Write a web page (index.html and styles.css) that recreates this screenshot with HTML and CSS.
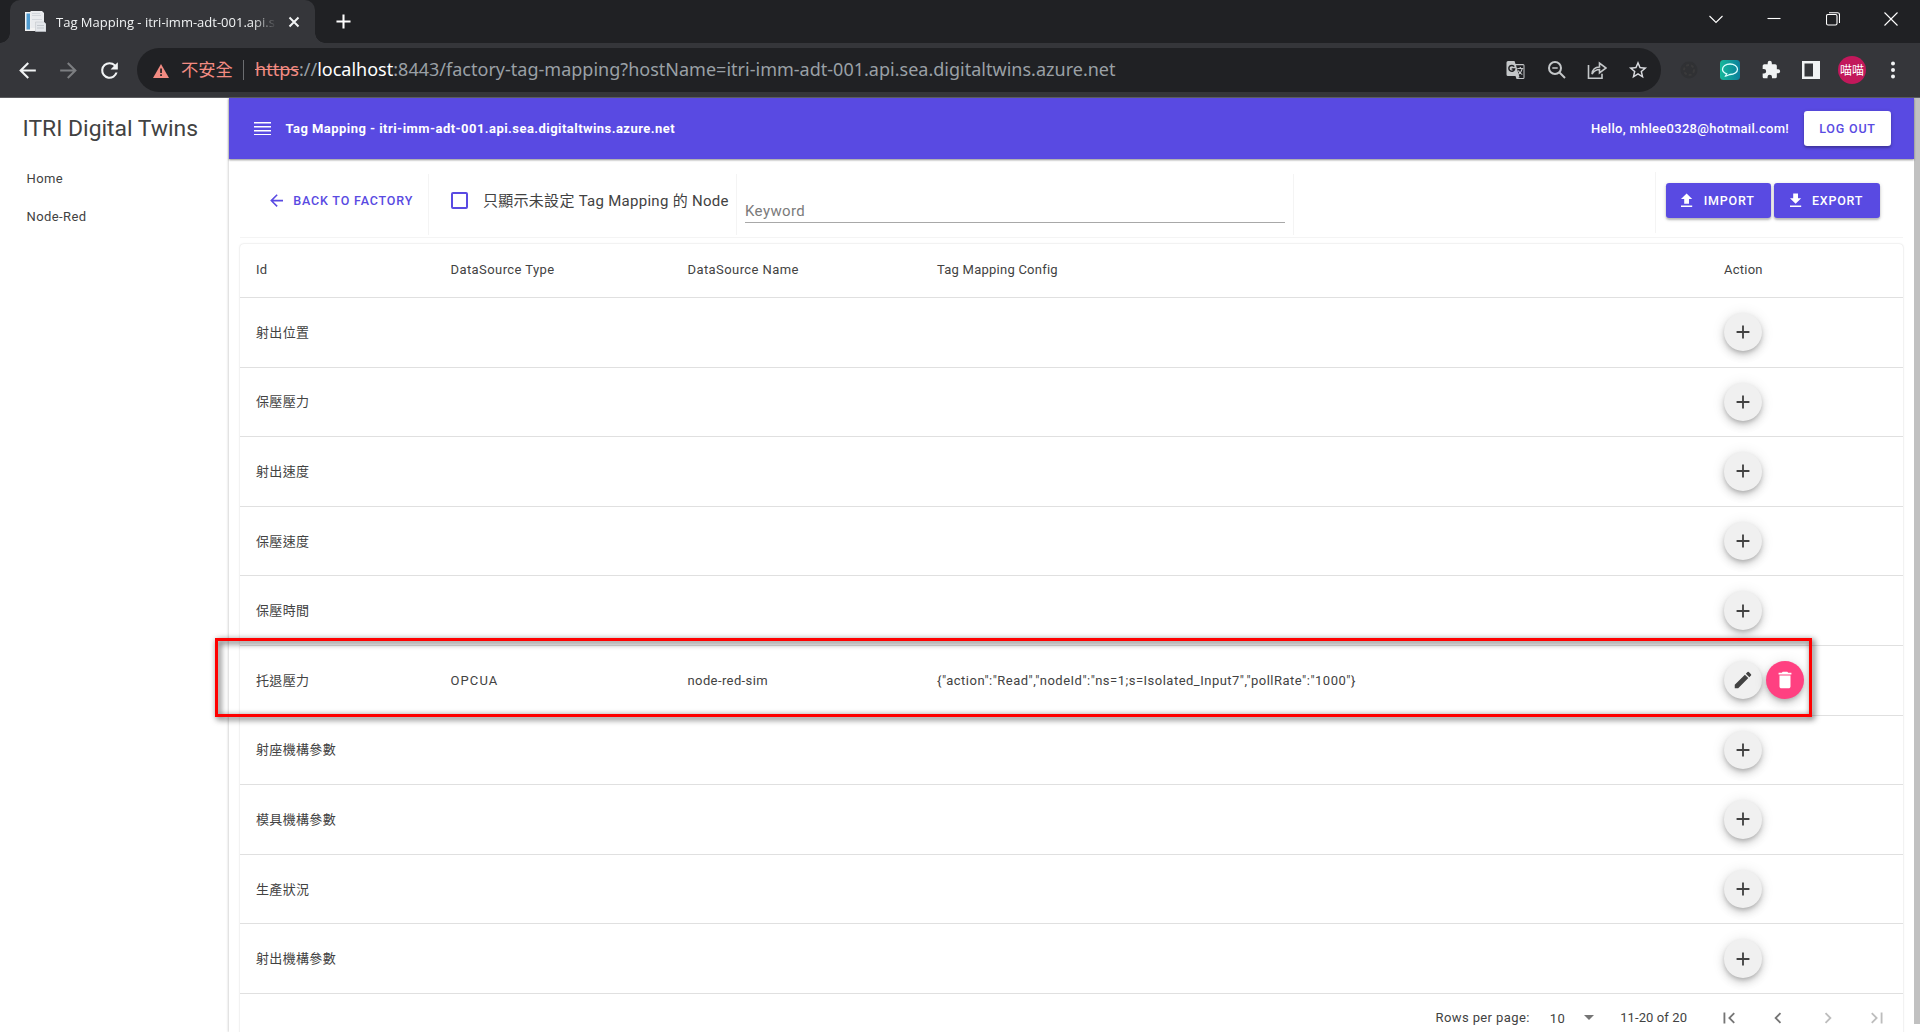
FILE: index.html
```
<!DOCTYPE html>
<html lang="zh-Hant">
<head>
<meta charset="utf-8">
<title>Tag Mapping - itri-imm-adt-001.api.sea.digitaltwins.azure.net</title>
<link rel="stylesheet" href="styles.css">
</head>
<body>
<svg class="defs" width="0" height="0">
  <symbol id="plus" viewBox="0 0 24 24"><path d="M19 13h-6v6h-2v-6H5v-2h6V5h2v6h6z"/></symbol>
  <symbol id="back" viewBox="0 0 24 24"><path d="M20 11H7.830l5.590-5.590L12 4l-8 8 8 8 1.410-1.410L7.830 13H20z"/></symbol>
</svg>
<div class="browser">
  <div class="tabstrip">
    <div class="tab">
      <svg class="favicon" viewBox="0 0 21 21"><path d="M0 1h11v19H0z" fill="#f3f3f3"/><path d="M1.500 2.500h3.500v16H1.500z" fill="#4f9bd0"/><path d="M5.500 0H17l2 2v15H5.500z" fill="#e9ebee"/><path d="M7 2h8v1H7zm0 2h9v1H7zm0 4h10v1H7z" fill="#d3d7dc"/><path d="M10.500 11H19l2 2v7.500H10.500z" fill="#e3e6ea" stroke="#c4c8cd" stroke-width=".6"/><path d="M12 14h7v1h-7zm0 2.500h7v1h-7z" fill="#c3c8ce"/></svg>
      <span class="tab-title">Tag Mapping - itri-imm-adt-001.api.s</span>
      <svg class="tab-close" viewBox="0 0 12 12"><path d="M1.500 1.500l9 9m0-9l-9 9" stroke="#f1f3f4" stroke-width="2" fill="none"/></svg>
    </div>
    <svg class="tab-new" viewBox="0 0 16 16"><path d="M8 .5v15M.5 8h15" stroke="#fff" stroke-width="2.200"/></svg>
    <div class="window-buttons">
      <svg viewBox="0 0 14 14"><path d="M.5 4L7 10.500 13.500 4"/></svg>
      <svg viewBox="0 0 14 14"><path d="M.5 6.500h13"/></svg>
      <svg viewBox="0 0 14 14"><rect x=".5" y="2.500" width="10.500" height="10.500" rx="1.500"/><path d="M3 .7h8.500a2 2 0 0 1 2 2V11"/></svg>
      <svg viewBox="0 0 14 14"><path d="M.5.5l13 13m0-13l-13 13"/></svg>
    </div>
  </div>
  <div class="navbar">
    <div class="nav-icons">
      <svg viewBox="0 0 24 24"><use href="#back"/></svg>
      <svg class="dim" viewBox="0 0 24 24"><path d="M12 4l-1.410 1.410L16.170 11H4v2h12.170l-5.580 5.590L12 20l8-8z"/></svg>
      <svg viewBox="0 0 24 24"><path d="M17.650 6.350A7.960 7.960 0 0 0 12 4a8 8 0 1 0 7.730 10h-2.080A6 6 0 1 1 12 6c1.660 0 3.140.69 4.220 1.780L13 11h7V4z"/></svg>
    </div>
    <div class="omnibox">
      <svg class="warn" viewBox="0 0 16 14"><path d="M8 0l8 14H0z" fill="#f28b82"/><path d="M7.200 4.500h1.700v4.600H7.200zm0 5.800h1.700V12H7.200z" fill="#202124"/></svg>
      <span class="insecure">不安全</span>
      <span class="bar"></span>
      <span class="url"><span class="scheme">https</span>://<span class="host">localhost</span>:8443/factory-tag-mapping?hostName=itri-imm-adt-001.api.sea.digitaltwins.azure.net</span>
      <div class="omni-icons">
        <svg viewBox="0 0 20 20"><path d="M2 1h6.500l1 3H17a1.500 1.500 0 0 1 1.500 1.500v12A1.500 1.500 0 0 1 17 19h-6.500l-1-3H2A1.500 1.500 0 0 1 .5 14.500v-12A1.500 1.500 0 0 1 2 1z" fill="#c4c7c9"/><path d="M10 5.300l3.500 12-1.500.7h5.500V5.300z" fill="#202124"/><path d="M8.200 6.700A2.900 2.900 0 1 0 8.600 9H5.700" stroke="#202124" fill="none" stroke-width="1.500"/><path d="M11.300 8.500h6M14.300 7v1.500m2 0c-.5 2.500-2 4.500-4 6m0-4c.7 1.600 2.300 3.400 4 4" stroke="#c4c7c9" fill="none" stroke-width="1.200"/></svg>
        <svg viewBox="0 0 20 20" fill="none" stroke="#c4c7c9" stroke-width="2"><circle cx="8" cy="8" r="6"/><path d="M12.500 12.500L18 18"/><path d="M5.300 8h5.400" stroke-width="1.500"/></svg>
        <svg viewBox="0 0 20 20" fill="none" stroke="#c4c7c9" stroke-width="1.600"><path d="M1.500 5v13.200H15v-4.400M5 14c.5-4.500 3-7 7.500-7V3L19 8l-6.500 5V9.500C9 9.500 7 11 5 14z"/></svg>
        <svg class="star" viewBox="1 1 22 22" fill="#dadce0"><path d="M22 9.240l-7.190-.62L12 2 9.190 8.630 2 9.240l5.460 4.730L5.820 21 12 17.270 18.180 21l-1.630-7.030zM12 15.400l-3.760 2.270 1-4.280-3.320-2.880 4.380-.38L12 6.100l1.710 4.040 4.380.38-3.320 2.880 1 4.280z"/></svg>
      </div>
    </div>
    <div class="extensions">
      <svg viewBox="0 0 20 20"><circle cx="10" cy="10" r="8.500" fill="#303134"/><circle cx="10" cy="10" r="5" fill="none" stroke="#3a3a3b" stroke-width="2" stroke-dasharray="3 2"/></svg>
      <svg viewBox="0 0 20 20"><defs><linearGradient id="teal" x2="1"><stop stop-color="#16b89a"/><stop offset="1" stop-color="#0b7f9b"/></linearGradient></defs><rect width="20" height="20" rx="3.500" fill="url(#teal)"/><path d="M5.500 16l1.200-2.200C4 12.900 2.500 11.400 2.500 9.300 2.500 6.300 5.800 4 10 4s7.500 2.300 7.500 5.300-3.300 5.200-7.500 5.200c-.8 0-2.500 1.300-4.500 1.500z" fill="none" stroke="#dff" stroke-width="1.300"/></svg>
      <svg viewBox="0 0 24 24" fill="#f1f3f4"><path d="M20.500 11H19V7a2 2 0 0 0-2-2h-4V3.500a2.500 2.500 0 0 0-5 0V5H4a2 2 0 0 0-2 2v3.800h1.500a2.700 2.700 0 0 1 0 5.400H2V20c0 1.100.9 2 2 2h3.800v-1.500a2.700 2.700 0 0 1 5.400 0V22H17a2 2 0 0 0 2-2v-4h1.500a2.500 2.500 0 0 0 0-5z"/></svg>
      <svg viewBox="0 0 20 20"><path fill="#f1f3f4" fill-rule="evenodd" d="M1 1h18v18H1zm2.500 2.500v13H12v-13z"/></svg>
      <span class="avatar">喵喵</span>
      <svg viewBox="0 0 20 20" fill="#f1f3f4"><circle cx="10" cy="3.500" r="2"/><circle cx="10" cy="10" r="2"/><circle cx="10" cy="16.500" r="2"/></svg>
    </div>
  </div>
</div>
<div class="page">
  <nav class="sidebar">
    <h1>ITRI Digital Twins</h1>
    <a>Home</a>
    <a>Node-Red</a>
  </nav>
  <div class="content">
    <header class="appbar">
      <svg class="menu" viewBox="0 0 18 13"><path d="M0 0h17v1.500H0zm0 4h17v1.500H0zm0 4h17v1.500H0zm0 4h17v1H0z"/></svg>
      <span class="appbar-title">Tag Mapping - itri-imm-adt-001.api.sea.digitaltwins.azure.net</span>
      <span class="hello">Hello, mhlee0328@hotmail.com!</span>
      <button class="btn logout">LOG OUT</button>
    </header>
    <main>
      <div class="toolbar">
        <div class="cell cell-back"><svg class="icon" viewBox="0 0 24 24"><use href="#back"/></svg><span>BACK TO FACTORY</span></div>
        <div class="cell cell-check"><span class="checkbox"></span><label>只顯示未設定 Tag Mapping 的 Node</label></div>
        <div class="cell cell-search"><div class="field">Keyword</div></div>
        <div class="cell cell-space"></div>
        <div class="cell-actions">
          <button class="btn primary"><svg class="icon" viewBox="0 0 24 24"><path d="M9 16h6v-6h4l-7-7-7 7h4zm-4 2h14v2H5z"/></svg>IMPORT</button>
          <button class="btn primary"><svg class="icon" viewBox="0 0 24 24"><path d="M19 9h-4V3H9v6H5l7 7zM5 18v2h14v-2z"/></svg>EXPORT</button>
        </div>
      </div>
      <section class="card">
        <div class="row head"><span>Id</span><span class="ds">DataSource Type</span><span class="ds">DataSource Name</span><span>Tag Mapping Config</span><span>Action</span></div>
        <div class="row"><span class="id">射出位置</span><div class="actions"><i class="fab"><svg viewBox="0 0 24 24"><use href="#plus"/></svg></i></div></div>
        <div class="row"><span class="id">保壓壓力</span><div class="actions"><i class="fab"><svg viewBox="0 0 24 24"><use href="#plus"/></svg></i></div></div>
        <div class="row"><span class="id">射出速度</span><div class="actions"><i class="fab"><svg viewBox="0 0 24 24"><use href="#plus"/></svg></i></div></div>
        <div class="row"><span class="id">保壓速度</span><div class="actions"><i class="fab"><svg viewBox="0 0 24 24"><use href="#plus"/></svg></i></div></div>
        <div class="row"><span class="id">保壓時間</span><div class="actions"><i class="fab"><svg viewBox="0 0 24 24"><use href="#plus"/></svg></i></div></div>
        <div class="row marked"><span class="id">托退壓力</span><span class="type">OPCUA</span><span>node-red-sim</span><span class="config">{"action":"Read","nodeId":"ns=1;s=Isolated_Input7","pollRate":"1000"}</span><div class="actions"><i class="fab"><svg viewBox="0 0 24 24"><path d="M3 17.250V21h3.750L17.810 9.940l-3.750-3.750zM20.710 7.040a1 1 0 0 0 0-1.410l-2.340-2.340a1 1 0 0 0-1.410 0l-1.830 1.830 3.750 3.750z"/></svg></i><i class="fab delete"><svg viewBox="0 0 24 24"><path d="M6 19c0 1.100.9 2 2 2h8c1.100 0 2-.9 2-2V7H6zM19 4h-3.500l-1-1h-5l-1 1H5v2h14z"/></svg></i></div></div>
        <div class="row"><span class="id">射座機構參數</span><div class="actions"><i class="fab"><svg viewBox="0 0 24 24"><use href="#plus"/></svg></i></div></div>
        <div class="row"><span class="id">模具機構參數</span><div class="actions"><i class="fab"><svg viewBox="0 0 24 24"><use href="#plus"/></svg></i></div></div>
        <div class="row"><span class="id">生產狀況</span><div class="actions"><i class="fab"><svg viewBox="0 0 24 24"><use href="#plus"/></svg></i></div></div>
        <div class="row"><span class="id">射出機構參數</span><div class="actions"><i class="fab"><svg viewBox="0 0 24 24"><use href="#plus"/></svg></i></div></div>
        <footer class="pager">
          <span>Rows per page:</span>
          <span class="size">10</span>
          <svg class="caret" viewBox="0 0 10 5"><path d="M0 0h10L5 5z"/></svg>
          <span class="range">11-20 of 20</span>
          <div class="pages">
            <svg viewBox="0 0 24 24"><path d="M18.410 16.590L13.820 12l4.590-4.590L17 6l-6 6 6 6zM6 6h2v12H6z"/></svg>
            <svg viewBox="0 0 24 24"><path d="M15.410 7.410L14 6l-6 6 6 6 1.410-1.410L10.830 12z"/></svg>
            <svg class="off" viewBox="0 0 24 24"><path d="M10 6L8.590 7.410 13.170 12l-4.580 4.590L10 18l6-6z"/></svg>
            <svg class="off" viewBox="0 0 24 24"><path d="M5.590 7.410L10.180 12l-4.590 4.590L7 18l6-6-6-6zM16 6h2v12h-2z"/></svg>
          </div>
        </footer>
      </section>
    </main>
  </div>
  <div class="scrollbar"><div class="thumb"></div></div>
</div>
</body>
</html>
```
FILE: styles.css
```
*, *::before, *::after { box-sizing: border-box; }
body { margin: 0; height: 1032px; overflow: hidden; display: flex; flex-direction: column; background: #fff; color: #424242; font: 13px "Roboto", "Noto Sans CJK TC", sans-serif; letter-spacing: .4px; white-space: nowrap; }
svg { display: block; flex: none; }
.defs { position: absolute; }

/* browser frame */
.browser { height: 98px; flex: none; background: #35363a; border-bottom: 1px solid #5b5c5f; letter-spacing: 0; }
.tabstrip { height: 43px; background: #202124; display: flex; align-items: center; }
.tab { position: relative; width: 305px; height: 43px; margin-left: 10px; background: #35363a; border-radius: 10px 10px 0 0; display: flex; align-items: center; padding: 0 15px; }
.tab::before, .tab::after { content: ""; position: absolute; bottom: 0; width: 10px; height: 10px; }
.tab::before { left: -10px; background: radial-gradient(circle at 0 0, #202124 9.500px, #35363a 10px); }
.tab::after { right: -10px; background: radial-gradient(circle at 100% 0, #202124 9.500px, #35363a 10px); }
.favicon { width: 21px; height: 21px; }
.tab-title { width: 223px; margin-left: 10px; font: 13px "Open Sans", sans-serif; color: #f1f3f4; -webkit-mask-image: linear-gradient(90deg, #000 88%, transparent 99%); mask-image: linear-gradient(90deg, #000 88%, transparent 99%); }
.tab-close { width: 12px; height: 12px; margin-left: 9px; }
.tab-new { width: 15px; height: 15px; margin-left: 20.500px; }
.window-buttons { margin-left: auto; display: flex; gap: 44.500px; padding: 0 22px 6px 0; }
.window-buttons svg { width: 14px; height: 14px; fill: none; stroke: #fff; stroke-width: 1.100; }
.navbar { height: 54px; display: flex; align-items: center; }
.nav-icons { width: 137px; display: flex; gap: 16px; padding-left: 15px; fill: #f1f3f4; }
.nav-icons svg { width: 25px; height: 25px; }
.nav-icons .dim { fill: #7c7e81; }
.omnibox { width: 1524px; height: 44px; border-radius: 22px; background: #202124; display: flex; align-items: center; padding: 0 13px 0 16px; }
.warn { width: 16px; height: 14px; margin-top: 2px; }
.insecure { margin: 0 0 3px 12px; width: 62px; font: 17.300px "Noto Sans CJK TC", sans-serif; color: #f28b82; }
.bar { width: 1px; height: 20px; background: #6b6d70; margin-right: 11px; }
.url { margin-bottom: 2px; font: 18px "Noto Sans", sans-serif; color: #9aa0a6; letter-spacing: .01px; }
.scheme { color: #f28b82; text-decoration: line-through; }
.host { color: #fff; }
.omni-icons { margin-left: auto; display: flex; gap: 20.700px; }
.omni-icons svg { width: 20px; height: 20px; }
.extensions { display: flex; align-items: center; padding-left: 8px; }
.extensions svg { width: 20px; height: 20px; margin: 0 10.350px; }
.avatar { width: 28px; height: 28px; margin: 0 6.350px; border-radius: 50%; background: #c2185b; color: #fff; font: 12px/28px "Noto Sans CJK TC", sans-serif; text-align: center; }

/* application */
.page { flex: 1; min-height: 0; display: flex; overflow: hidden; }
.sidebar { width: 229px; flex: none; display: flex; flex-direction: column; }
.sidebar h1 { margin: 15px 0 20px 22.500px; font-size: 22.900px; font-weight: 400; line-height: 32px; letter-spacing: 0; }
.sidebar a { padding-left: 26.500px; line-height: 28px; margin-bottom: 10px; letter-spacing: .4px; }
.content { flex: 1; min-width: 0; box-shadow: -1px 0 2px rgba(0,0,0,.16); }
.appbar { position: relative; height: 61px; background: #594ae2; color: #fff; fill: #fff; display: flex; align-items: center; padding: 0 23px 0 25px; box-shadow: 0 1px 2px rgba(0,0,0,.45); }
.menu { width: 18px; height: 13px; }
.appbar-title { margin-left: 13.500px; font-weight: 700; letter-spacing: .45px; }
.hello { margin-left: auto; margin-right: 15px; font-weight: 500; letter-spacing: .28px; }
.btn { height: 35px; border: 0; border-radius: 3.200px; display: flex; align-items: center; justify-content: center; font: 500 12.500px "Roboto", sans-serif; letter-spacing: .8px; box-shadow: 0 2px 2px rgba(0,0,0,.2), 0 1px 4px rgba(0,0,0,.16); padding: 0; }
.logout { width: 87px; background: #fff; color: #594ae2; }
main { padding: 13px 11px 0; }
.toolbar { height: 66px; border-bottom: 1px solid #f4f4f4; display: flex; }
.cell { height: 61px; margin-top: 2px; border-right: 1px solid #f4f4f4; display: flex; align-items: center; }
.cell-back { width: 189px; padding: 0 0 8px 27px; color: #594ae2; fill: #594ae2; font-weight: 500; font-size: 12.500px; letter-spacing: .84px; gap: 7px; }
.icon { width: 19.200px; height: 19.200px; }
.cell-check { width: 308px; padding: 0 0 8px 22px; font-size: 15px; letter-spacing: .28px; }
.cell-check label { margin-bottom: 3px; }
.checkbox { width: 17px; height: 17px; border: 2px solid #594ae2; border-radius: 2px; margin-right: 15px; }
.cell-search { width: 557px; padding: 0 8px; }
.field { width: 542px; height: 26px; margin-top: 11px; border-bottom: 1px solid #a8a8a8; color: #7b7b7b; font-size: 15px; line-height: 28px; letter-spacing: .4px; }
.cell-space { width: 362px; margin-top: 0; }
.cell-actions { display: flex; gap: 3px; padding: 11px 0 0 10px; }
.primary { width: 105px; background: #594ae2; color: #fff; fill: #fff; }
.primary + .primary { width: 106px; }
.primary .icon { margin-right: 7px; margin-left: -5px; }
.card { margin-top: 6px; border-radius: 4px; box-shadow: 0 0 2px rgba(0,0,0,.2); }
.row { height: 69.600px; display: grid; grid-template-columns: 194.500px 237px 249.500px 787px 1fr; align-items: center; padding-left: 16px; border-bottom: 1px solid #e0e0e0; }
.head { height: 54px; letter-spacing: .24px; padding-bottom: 2px; }
.ds { letter-spacing: .42px; }
.id { padding-bottom: 2px; letter-spacing: .33px; }
.type { letter-spacing: 1.100px; }
.actions { grid-column: 5; display: flex; gap: 3.500px; }
.fab { width: 38.400px; height: 38.400px; border-radius: 50%; background: #f0f0f0; fill: #424242; display: flex; align-items: center; justify-content: center; box-shadow: 0 2.400px 4px -1px rgba(0,0,0,.2), 0 4.800px 8px rgba(0,0,0,.14), 0 1px 14px rgba(0,0,0,.1); }
.fab svg { width: 22px; height: 22px; }
.delete { background: #ff4081; fill: #fff; }
.config { letter-spacing: .49px; }
.marked { position: relative; }
.marked::after { content: ""; position: absolute; left: -25px; top: -8px; width: 1597px; height: 79px; border: 3px solid #f00; filter: drop-shadow(2px 2px 3px rgba(0,0,0,.8)); }
.pager { height: 48px; display: flex; align-items: center; padding-right: 15px; justify-content: flex-end; fill: #757575; }
.size { margin: 1px 19px 0 20px; }
.caret { width: 10px; height: 5px; }
.range { margin-left: 26px; letter-spacing: .1px; }
.pages { display: flex; gap: 27.300px; margin-left: 31px; }
.pages svg { width: 22px; height: 22px; }
.off { fill: #bdbdbd; }
.scrollbar { width: 6px; flex: none; background: #fff; }
.thumb { height: 926px; background: #c1c1c1; }
```
